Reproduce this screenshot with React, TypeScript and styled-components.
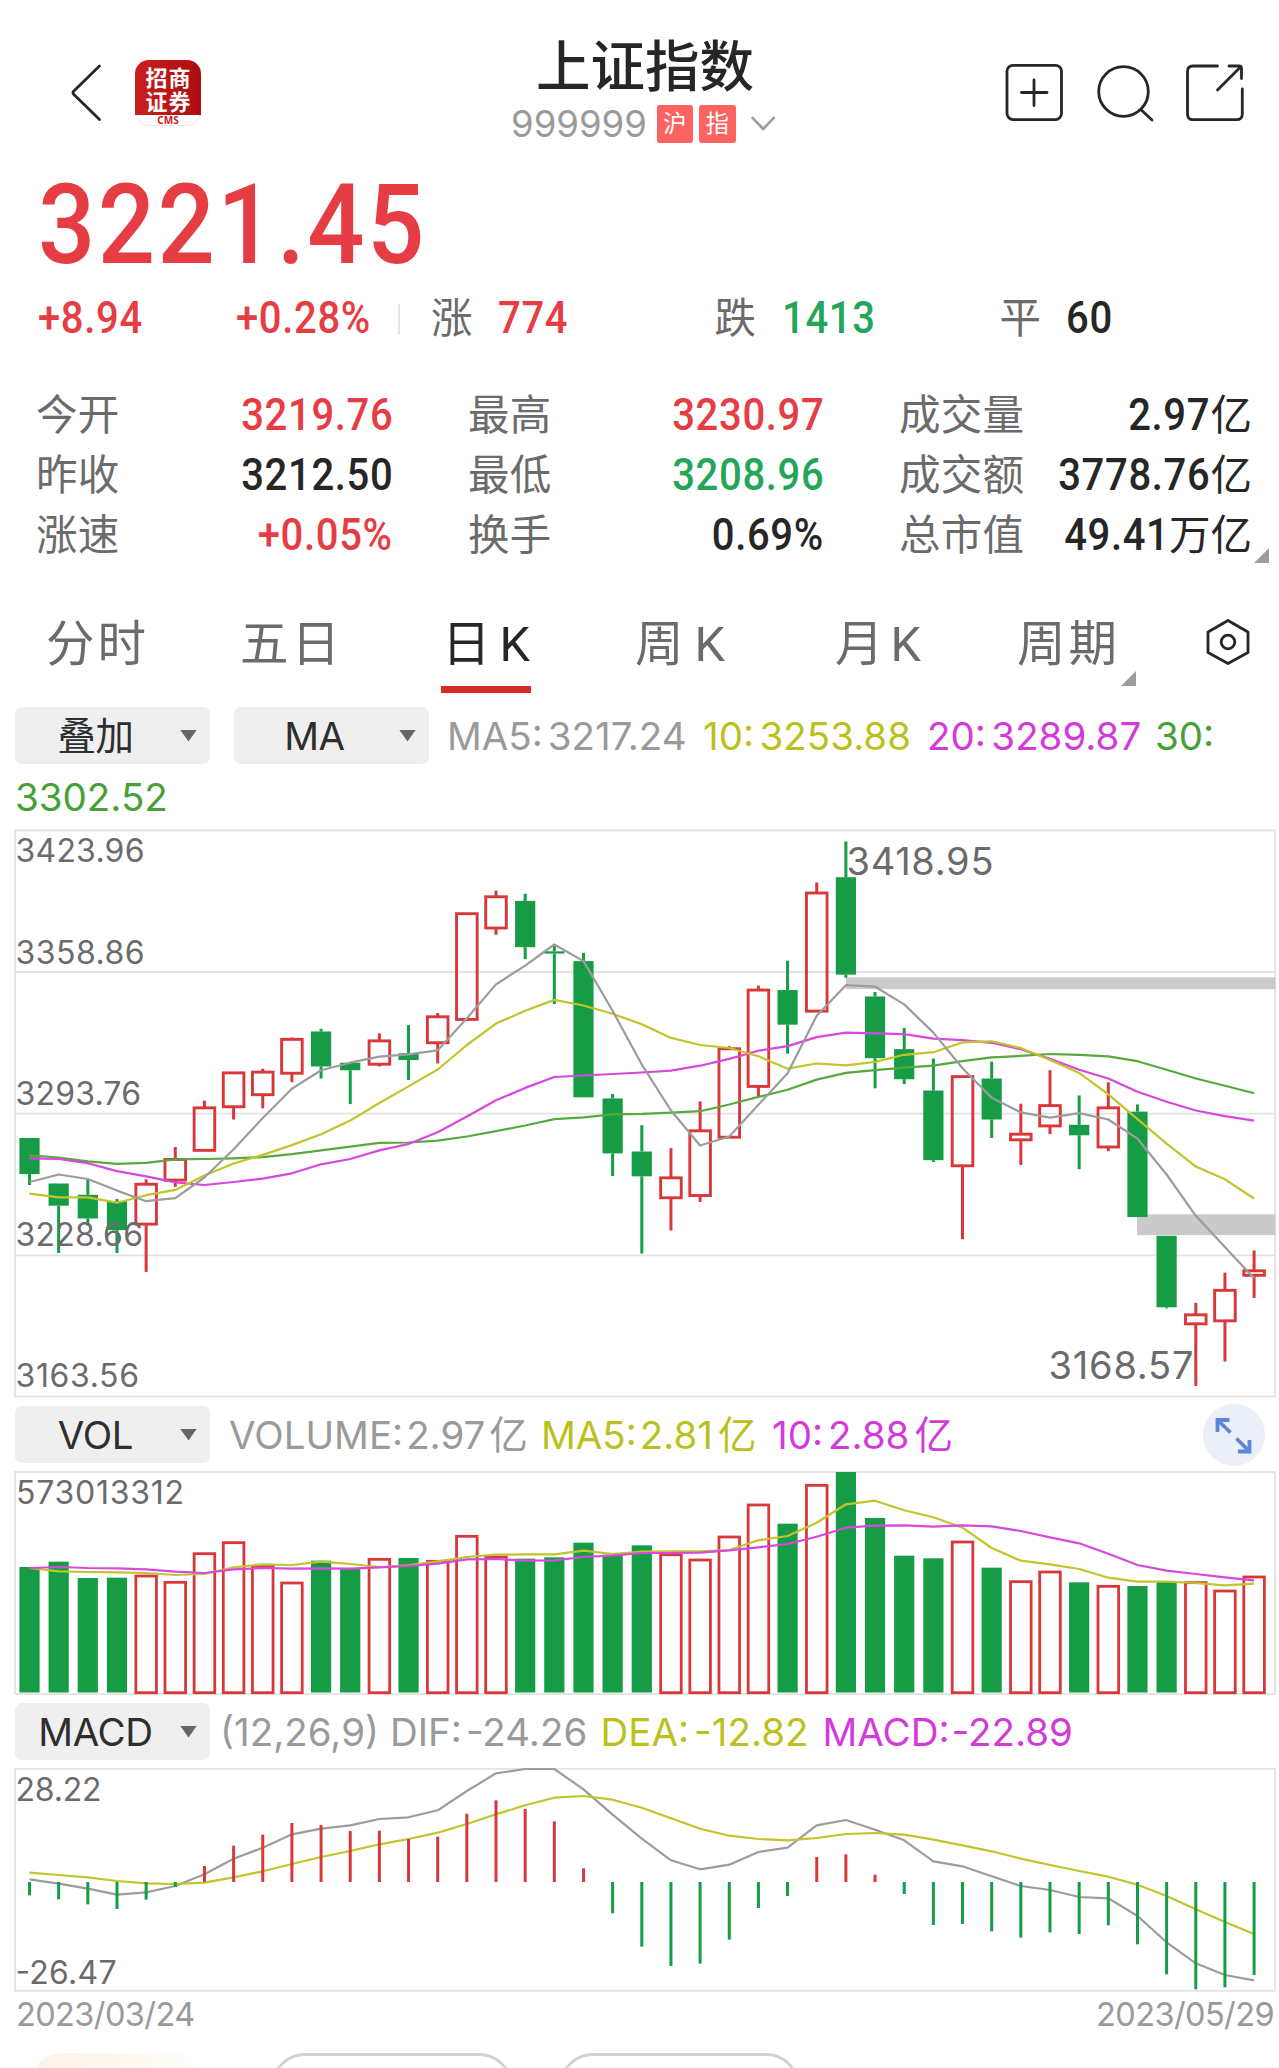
import React from "react";
import styled, { createGlobalStyle } from "styled-components";

const GlobalStyle = createGlobalStyle`
  body { margin: 0; background: #fff; overflow: hidden; }
  * { box-sizing: border-box; }
`;

const din = `Roboto, "Noto Sans CJK SC", sans-serif`;
const ui = `Inter, "Noto Sans CJK SC", sans-serif`;

const color = {
  ink: "#262626",
  label: "#6b6b6b",
  muted: "#9a9a9a",
  up: "#e53d43",
  down: "#23a65a",
  yellow: "#bcc01c",
  magenta: "#d23bd9",
  green: "#46a035",
  barUp: "#d8383a",
  barDown: "#159c45",
  frame: "#e3e3e3",
};

const Page = styled.main`
  width: 1279px;
  height: 2068px;
  overflow: hidden;
  display: flex;
  flex-direction: column;
  background: #fff;
  font-family: ${ui};
  color: ${color.ink};
  white-space: nowrap;
`;

/* ---------- header ---------- */

const Header = styled.header`
  height: 160px;
  flex: none;
  display: flex;
  align-items: flex-start;
`;

const HeaderLeft = styled.div`
  width: 511px;
  padding: 60px 0 0 70px;
  display: flex;
  gap: 32px;
`;

const Logo = styled.div`
  width: 66px;
  height: 66px;
  border-radius: 14px;
  border: 1px solid #f8e4e4;
  background: #fff;
  display: flex;
  flex-direction: column;
`;

const LogoMark = styled.div`
  height: 55px;
  flex: none;
  margin: -1px -1px 0;
  padding: 4px 0 0 1px;
  border-radius: 14px 14px 0 0;
  background: linear-gradient(90deg, #c8201f, #ad0d10);
  color: #fff;
  font: 700 22px/24px "Noto Sans CJK SC", sans-serif;
  letter-spacing: 1px;
  text-align: center;
`;

const LogoCaption = styled.div`
  color: #c21f21;
  font: 700 10px/10px "Noto Sans", sans-serif;
  text-align: center;
`;

const TitleBlock = styled.div`
  width: 268px;
  padding-top: 31px;
  display: flex;
  flex-direction: column;
`;

const Title = styled.h1`
  margin: 0;
  height: 73px;
  font: 500 54.5px/73px ${din};
  text-align: center;
`;

const CodeRow = styled.div`
  height: 40px;
  display: flex;
  align-items: center;
  gap: 6px;
`;

const Code = styled.span`
  width: 141.5px;
  color: ${color.muted};
  font-size: 36.5px;
  line-height: 40px;
`;

const Tag = styled.span`
  width: 37px;
  height: 38px;
  border-radius: 3px;
  background: #fc6361;
  color: #fff;
  font: 400 23.5px/39px ${din};
  text-align: center;
`;

const HeaderIcons = styled.div`
  margin-left: auto;
  padding: 62px 35px 0 0;
  display: flex;
  gap: 30px;
`;

/* ---------- quote ---------- */

const Price = styled.div`
  width: 460px;
  height: 125px;
  flex: none;
  margin-left: 38px;
  padding-top: 2px;
  color: ${color.up};
  font: 500 112px/125px ${din};
  letter-spacing: 2.7px;
  transform: scaleX(0.9);
  transform-origin: left center;
`;

const Breadth = styled.div`
  height: 65px;
  flex: none;
  padding: 3px 0 0 37.5px;
  display: grid;
  grid-template-columns: 198px 162.5px 33px 283.5px 285px auto;
  align-items: center;
`;

const Num = styled.span<{ $c?: string; $end?: boolean }>`
  display: inline-block;
  color: ${(p) => p.$c ?? color.ink};
  font: 500 43.5px/60px ${din};
  letter-spacing: 0.7px;
  transform: scaleX(0.92);
  transform-origin: ${(p) => (p.$end ? "right" : "left")} center;
`;

const Cjk = styled.span`
  font: 400 41.5px/60px ${din};
`;

const Divider = styled.i`
  width: 2px;
  height: 31px;
  background: #e4e4e4;
`;

const Pair = styled.div`
  display: flex;
`;

const Label = styled.span<{ $w?: number }>`
  width: ${(p) => (p.$w ? p.$w + "px" : "auto")};
  color: ${color.label};
  font: 400 41.5px/60px ${din};
  letter-spacing: 0.3px;
`;

const Stats = styled.section`
  position: relative;
  height: 246px;
  flex: none;
  padding: 36px 27px 0 36px;
  display: grid;
  grid-template-columns: 357px 356px 353px;
  grid-auto-rows: 60px;
  column-gap: 75px;
`;

const Stat = styled.div`
  display: flex;
  justify-content: space-between;
`;

const Corner = styled.i<{ $x: number; $y: number }>`
  position: absolute;
  left: ${(p) => p.$x}px;
  top: ${(p) => p.$y}px;
  width: 15px;
  height: 15px;
  background: #9b9d9f;
  clip-path: polygon(100% 0, 100% 100%, 0 100%);
`;

/* ---------- tabs ---------- */

const Tabs = styled.nav`
  height: 109px;
  flex: none;
  padding-left: 46px;
  display: grid;
  grid-template-columns: 194px 201px 194px 200px 182px 187px auto;
  align-items: start;
`;

const Tab = styled.div<{ $active?: boolean }>`
  position: relative;
  justify-self: start;
  width: ${(p) => (p.$active ? "90px" : "auto")};
  height: 97px;
  padding-left: ${(p) => (p.$active ? 1 : 0)}px;
  border-bottom: 7px solid ${(p) => (p.$active ? "#d92b2b" : "transparent")};
  color: ${(p) => (p.$active ? color.ink : color.label)};
  font: 400 48.5px/97px ${din};
  letter-spacing: 3px;
`;

const Unit = styled.span<{ $gap: number }>`
  margin-left: ${(p) => p.$gap}px;
`;

const SettingsSlot = styled.div`
  padding: 21px 0 0;
`;

/* ---------- indicator rows ---------- */

const IndicatorRow = styled.div<{ $h: number }>`
  height: ${(p) => p.$h}px;
  flex: none;
  padding-left: 15px;
  display: flex;
  flex-wrap: wrap;
  align-content: flex-start;
`;

const Slot = styled.div<{ $w?: number; $c?: string; $h?: number }>`
  width: ${(p) => (p.$w ? p.$w + "px" : "auto")};
  height: ${(p) => p.$h ?? 61}px;
  padding-top: 2px;
  display: flex;
  align-items: center;
  color: ${(p) => p.$c ?? color.ink};
  font-size: 38.5px;
  line-height: 57px;
`;

const Value = styled.span<{ $gap?: number }>`
  margin-left: ${(p) => p.$gap ?? 5.5}px;
`;

const Select = styled.button`
  width: 195px;
  height: 57px;
  margin-top: -2px;
  padding: 0 13px 0 0;
  border: 0;
  border-radius: 7px;
  background: #efefef;
  color: #2e2e2e;
  display: flex;
  align-items: center;
  font: 400 38.5px/57px ${ui};
  letter-spacing: -0.4px;
`;

const SelectText = styled.span`
  flex: 1;
  text-align: center;
  padding: 1px 4px 0 0;
`;

const Caret = styled.i`
  width: 17px;
  height: 12px;
  background: #666;
  clip-path: polygon(0 0, 100% 0, 50% 100%);
`;

const ChartSvg = styled.svg`
  display: block;
  flex: none;
  font-family: ${ui};
`;

const Dates = styled.div`
  height: 60px;
  flex: none;
  padding: 0 5px 0 16px;
  display: flex;
  justify-content: space-between;
  color: ${color.muted};
  font-size: 32.5px;
  line-height: 43px;
  letter-spacing: -0.6px;
`;

const Pills = styled.div`
  height: 15px;
  flex: none;
  padding-left: 29px;
  display: flex;
  overflow: hidden;
`;

const Pill = styled.div<{ $w: number; $gap: number; $warm?: boolean }>`
  width: ${(p) => p.$w}px;
  height: 68px;
  flex: none;
  margin-right: ${(p) => p.$gap}px;
  border-radius: 34px;
  border: ${(p) => (p.$warm ? "0" : "3px solid #d2d2d2")};
  background: ${(p) => (p.$warm ? "linear-gradient(90deg, #fdf3e6, #fffaf2 70%, #ffffff)" : "#fff")};
`;

/* ---------- chart data ---------- */

const cx = (i: number) => 29.5 + 29.157 * i;

type Candle = [0 | 1, number, number, number, number];
// [rising, high, body top, body bottom, low], in plot units below the upper edge
const candles: Candle[] = [
  [0, 845, 845, 941, 970], [0, 966, 966, 1025, 1151], [0, 955, 996, 1059, 1078], [0, 1007, 1013, 1090, 1151],
  [1, 955, 968, 1074, 1201], [1, 869, 902, 957, 975], [1, 746, 765, 878, 880], [1, 670, 672, 762, 796],
  [1, 661, 670, 730, 766], [1, 578, 583, 673, 697], [0, 555, 562, 655, 687], [0, 645, 645, 665, 755],
  [1, 567, 587, 649, 655], [0, 545, 620, 638, 691], [1, 513, 523, 592, 647], [1, 249, 249, 530, 530],
  [1, 188, 204, 287, 305], [0, 196, 215, 338, 370], [0, 331, 349, 355, 489], [0, 353, 375, 737, 737],
  [0, 728, 740, 886, 946], [0, 811, 881, 947, 1152], [1, 872, 951, 1004, 1091], [1, 748, 826, 998, 1015],
  [1, 601, 608, 843, 843], [1, 440, 452, 708, 735], [0, 374, 452, 544, 621], [1, 166, 194, 508, 508],
  [0, 57, 152, 411, 419], [0, 457, 469, 633, 713], [0, 553, 609, 689, 702], [0, 634, 719, 904, 909],
  [1, 682, 682, 919, 1114], [0, 642, 687, 796, 845], [1, 754, 835, 850, 917], [1, 665, 759, 813, 835],
  [0, 732, 810, 838, 928], [1, 697, 765, 869, 880], [0, 756, 775, 1055, 1055], [0, 1105, 1105, 1295, 1298],
  [1, 1283, 1315, 1339, 1504], [1, 1203, 1250, 1331, 1439], [1, 1144, 1198, 1210, 1270],
];

const priceMa5 = [962, 942, 954, 985, 1013, 1005, 950, 875, 792, 714, 665, 645, 629, 623, 612, 527, 437, 387, 331, 375, 507, 650, 772, 865, 841, 757, 673, 520, 439, 443, 490, 565, 660, 738, 777, 791, 779, 796, 847, 942, 1052, 1135, 1218];
const priceMa10 = [993, 1003, 1003, 1017, 997, 983, 945, 913, 890, 864, 835, 799, 752, 708, 663, 598, 541, 507, 478, 493, 515, 543, 579, 598, 606, 628, 661, 647, 652, 643, 624, 617, 591, 588, 606, 638, 672, 729, 795, 860, 921, 955, 1006];
const priceMa20 = [899, 901, 912, 933, 947, 963, 970, 962, 953, 939, 915, 901, 878, 861, 830, 788, 745, 712, 683, 679, 675, 671, 666, 653, 635, 613, 601, 577, 565, 567, 569, 581, 585, 592, 609, 635, 664, 687, 722, 749, 772, 787, 799];
const priceMa30 = [891, 897, 907, 914, 911, 902, 901, 899, 896, 888, 878, 868, 858, 857, 852, 841, 827, 812, 795, 790, 782, 781, 778, 774, 756, 736, 717, 690, 672, 665, 658, 653, 641, 631, 627, 622, 624, 628, 641, 664, 687, 706, 726];

const volumeTop = [516, 500, 549, 548, 543, 562, 476, 443, 514, 564, 497, 522, 493, 489, 499, 424, 486, 491, 487, 443, 479, 451, 479, 495, 426, 330, 386, 271, 231, 369, 482, 490, 441, 518, 560, 531, 562, 574, 573, 561, 563, 588, 546];
const volumeMa5 = [519, 529, 531, 532, 534, 540, 537, 517, 508, 510, 500, 507, 516, 511, 499, 486, 479, 478, 478, 467, 477, 470, 469, 469, 465, 436, 423, 383, 328, 317, 346, 367, 398, 459, 497, 508, 522, 548, 560, 560, 564, 571, 566];
const volumeMa10 = [519, 516, 519, 520, 523, 530, 534, 523, 519, 521, 520, 521, 517, 513, 506, 493, 492, 497, 496, 486, 482, 474, 474, 473, 466, 457, 447, 425, 398, 392, 391, 395, 391, 394, 408, 427, 445, 476, 510, 527, 537, 547, 556];

const macdEnd = [436, 448, 463, 477, 449, 411, 348, 287, 254, 219, 225, 243, 242, 267, 260, 191, 151, 177, 214, 355, 490, 590, 648, 641, 569, 474, 438, 321, 313, 374, 432, 525, 522, 544, 563, 547, 552, 526, 583, 673, 718, 712, 675];
const dif = [388, 401, 416, 434, 427, 408, 373, 326, 293, 253, 236, 226, 207, 202, 181, 123, 70, 57, 57, 118, 194, 266, 331, 358, 344, 306, 293, 226, 210, 239, 271, 334, 349, 379, 408, 420, 441, 445, 498, 577, 640, 675, 691];
const dea = [368, 375, 382, 393, 400, 402, 398, 382, 364, 342, 321, 303, 283, 267, 248, 222, 193, 166, 143, 138, 149, 173, 205, 236, 257, 267, 271, 264, 252, 249, 254, 269, 286, 304, 326, 345, 363, 380, 404, 438, 478, 516, 552];

const priceY = (v: number) => 820 + v / 2.6576;
const volY = (v: number) => 1395 + v / 3;
const macdY = (v: number) => 1750 + v / 3;

function Line({ data, y, stroke }: { data: number[]; y: (v: number) => number; stroke: string }) {
  const points = data.map((v, i) => `${cx(i).toFixed(1)},${y(v).toFixed(1)}`).join(" ");
  return <polyline points={points} fill="none" stroke={stroke} strokeWidth={2.2} strokeLinejoin="round" />;
}

function Mark({ x, y, w, size, children }: { x: number; y: number; w: number; size: number; children: string }) {
  return (
    <text x={x} y={y} fontSize={size} textLength={w} fill={color.label}>
      {children}
    </text>
  );
}

function PriceChart() {
  return (
    <ChartSvg width={1279} height={570} viewBox="0 828 1279 570">
      <rect x={15} y={830.5} width={1260} height={566} fill="none" stroke={color.frame} strokeWidth={1.8} />
      {[972, 1113.6, 1255.3].map((y) => (
        <line key={y} x1={15} x2={1275} y1={y} y2={y} stroke={color.frame} strokeWidth={1.8} />
      ))}
      <rect x={846} y={977.3} width={429.5} height={11.8} fill="#cacaca" />
      <rect x={1137} y={1214.3} width={138.5} height={20.8} fill="#cacaca" />
      {candles.map(([up, hi, top, bottom, lo], i) => {
        const x = cx(i);
        const c = up ? color.barUp : color.barDown;
        return (
          <g key={i} stroke={c} strokeWidth={3} fill={up ? "none" : c}>
            <line x1={x} x2={x} y1={priceY(hi)} y2={priceY(top)} />
            <line x1={x} x2={x} y1={priceY(bottom)} y2={priceY(lo)} />
            {up ? (
              <rect x={x - 10.3} y={priceY(top)} width={20.6} height={priceY(bottom) - priceY(top)} strokeWidth={2.9} />
            ) : (
              <rect x={x - 10.1} y={priceY(top)} width={20.2} height={priceY(bottom) - priceY(top)} stroke="none" />
            )}
          </g>
        );
      })}
      <Line data={priceMa30} y={priceY} stroke="#56a83f" />
      <Line data={priceMa20} y={priceY} stroke="#d847de" />
      <Line data={priceMa10} y={priceY} stroke="#c1c42a" />
      <Line data={priceMa5} y={priceY} stroke="#9c9c9c" />
      <Mark x={15.5} y={862} w={129} size={32}>3423.96</Mark>
      <Mark x={15.5} y={964.3} w={129} size={32}>3358.86</Mark>
      <Mark x={15.5} y={1105.2} w={125.5} size={32}>3293.76</Mark>
      <Mark x={15.5} y={1246.3} w={127.5} size={32}>3228.66</Mark>
      <Mark x={15.5} y={1387.3} w={123.5} size={32}>3163.56</Mark>
      <Mark x={846.5} y={875} w={147} size={38}>3418.95</Mark>
      <Mark x={1048.5} y={1379} w={145} size={38}>3168.57</Mark>
    </ChartSvg>
  );
}

function VolumeChart() {
  return (
    <ChartSvg width={1279} height={226} viewBox="0 1470 1279 226">
      <rect x={15} y={1472} width={1260} height={222} fill="none" stroke={color.frame} strokeWidth={1.8} />
      {volumeTop.map((v, i) => {
        const x = cx(i);
        const y = volY(v);
        return candles[i][0] ? (
          <rect key={i} x={x - 10.3} y={y} width={20.6} height={1692.7 - y} fill="none" stroke={color.barUp} strokeWidth={2.8} />
        ) : (
          <rect key={i} x={x - 10.1} y={y} width={20.2} height={1692.5 - y} fill={color.barDown} />
        );
      })}
      <Line data={volumeMa5} y={volY} stroke="#c1c42a" />
      <Line data={volumeMa10} y={volY} stroke="#d847de" />
      <Mark x={16} y={1503.8} w={168} size={32}>573013312</Mark>
    </ChartSvg>
  );
}

function MacdChart() {
  return (
    <ChartSvg width={1279} height={226} viewBox="0 1767 1279 226">
      <rect x={15} y={1768.8} width={1260} height={222} fill="none" stroke={color.frame} strokeWidth={1.8} />
      <Line data={dif} y={macdY} stroke="#9c9c9c" />
      <Line data={dea} y={macdY} stroke="#c1c42a" />
      {macdEnd.map((v, i) => (
        <line key={i} x1={cx(i)} x2={cx(i)} y1={1882} y2={macdY(v)} stroke={v < 396 ? color.barUp : color.barDown} strokeWidth={3} />
      ))}
      <Mark x={15.5} y={1801.3} w={86} size={32}>28.22</Mark>
      <Mark x={15.5} y={1984.3} w={101} size={32}>-26.47</Mark>
    </ChartSvg>
  );
}

/* ---------- icons ---------- */

const stroke = { fill: "none", stroke: color.ink, strokeWidth: 2.8, strokeLinecap: "round" as const, strokeLinejoin: "round" as const };

const BackIcon = () => (
  <svg width="33" height="66" viewBox="70 60 33 66"><path d="M99.5 66 L73.6 91.2 Q72.4 92.7 73.6 94.2 L99.5 119.5" {...stroke} /></svg>
);
const AddIcon = () => (
  <svg width="60" height="60" viewBox="1005 62 60 60">
    <rect x="1008" y="65.3" width="54.5" height="54.3" rx="6" {...stroke} />
    <path d="M1022.5 92.5H1048M1035 80V105.5" {...stroke} />
  </svg>
);
const SearchIcon = () => (
  <svg width="60" height="60" viewBox="1095 62 60 60">
    <circle cx="1124.5" cy="91.5" r="24.8" {...stroke} />
    <path d="M1141.8 109.5L1153 120" {...stroke} />
  </svg>
);
const ShareIcon = () => (
  <svg width="60" height="60" viewBox="1185 62 60 60">
    <path d="M1218.5 66H1194Q1188.5 66 1188.5 71.5V114Q1188.5 119.7 1194 119.7H1237.5Q1243.3 119.7 1243.3 114V89M1230 66H1240Q1242.5 66 1242.5 68.5V78.5M1241.5 67L1218.5 90" {...stroke} />
  </svg>
);
const HexIcon = () => (
  <svg width="48" height="50" viewBox="1205 617 48 50">
    <path d="M1229 620.5L1249 632V652.5L1229 663.5L1209 652.5V632Z" {...stroke} />
    <circle cx="1229" cy="642" r="6.8" {...stroke} />
  </svg>
);
const ExpandIcon = () => (
  <svg width="64" height="64" viewBox="1203 1403 64 64">
    <circle cx="1235" cy="1434.8" r="31" fill="#ebeffa" />
    <g fill="none" stroke="#5b88d6" strokeWidth="3.8">
      <path d="M1218.5 1432V1420H1230.5M1219 1420.5L1231.5 1432.5" />
      <path d="M1250.5 1440V1451.5H1239M1250 1451L1237.5 1438.5" />
    </g>
  </svg>
);

const ExpandSlot = styled.div`
  margin-left: auto;
  padding: 5px 13px 0 0;
`;

const stats: [string, string, string, string?][] = [
  ["今开", "3219.76", "", color.up],
  ["最高", "3230.97", "", color.up],
  ["成交量", "2.97", "亿"],
  ["昨收", "3212.50", ""],
  ["最低", "3208.96", "", color.down],
  ["成交额", "3778.76", "亿"],
  ["涨速", "+0.05%", "", color.up],
  ["换手", "0.69%", ""],
  ["总市值", "49.41", "万亿"],
];

function Dropdown({ text }: { text: string }) {
  return (
    <Select>
      <SelectText>{text}</SelectText>
      <Caret />
    </Select>
  );
}

export default function App() {
  return (
    <Page>
      <GlobalStyle />
      <Header>
        <HeaderLeft>
          <BackIcon />
          <Logo>
            <LogoMark>招商<br />证券</LogoMark>
            <LogoCaption>CMS</LogoCaption>
          </Logo>
        </HeaderLeft>
        <TitleBlock>
          <Title>上证指数</Title>
          <CodeRow>
            <Code>999999</Code>
            <Tag>沪</Tag>
            <Tag>指</Tag>
            <svg width="38" height="20" viewBox="0 0 38 20">
              <path d="M10 3L21.5 15L33 3" fill="none" stroke="#a0a0a0" strokeWidth="2.8" />
            </svg>
          </CodeRow>
        </TitleBlock>
        <HeaderIcons>
          <AddIcon />
          <SearchIcon />
          <ShareIcon />
        </HeaderIcons>
      </Header>

      <Price>3221.45</Price>
      <Breadth>
        <Num $c={color.up}>+8.94</Num>
        <Num $c={color.up}>+0.28%</Num>
        <Divider />
        <Pair><Label $w={67}>涨</Label><Num $c={color.up}>774</Num></Pair>
        <Pair><Label $w={67}>跌</Label><Num $c={color.down}>1413</Num></Pair>
        <Pair><Label $w={66}>平</Label><Num>60</Num></Pair>
      </Breadth>

      <Stats>
        {stats.map(([label, value, unit, c]) => (
          <Stat key={label}>
            <Label>{label}</Label>
            <span><Num $c={c} $end>{value}</Num>{unit && <Cjk>{unit}</Cjk>}</span>
          </Stat>
        ))}
        <Corner $x={1254} $y={198} />
      </Stats>

      <Tabs>
        <Tab>分时</Tab>
        <Tab>五日</Tab>
        <Tab $active>日<Unit $gap={6}>K</Unit></Tab>
        <Tab>周<Unit $gap={8}>K</Unit></Tab>
        <Tab>月<Unit $gap={4}>K</Unit></Tab>
        <Tab>周期<Corner $x={104} $y={75} /></Tab>
        <SettingsSlot><HexIcon /></SettingsSlot>
      </Tabs>

      <IndicatorRow $h={123}>
        <Slot $w={219}><Dropdown text="叠加" /></Slot>
        <Slot $w={213}><Dropdown text="MA" /></Slot>
        <Slot $w={256} $c={color.muted}>MA5:<Value $gap={5}>3217.24</Value></Slot>
        <Slot $w={224} $c={color.yellow}>10:<Value>3253.88</Value></Slot>
        <Slot $w={228} $c={color.magenta}>20:<Value>3289.87</Value></Slot>
        <Slot $c={color.green}>30:</Slot>
        <Slot $w={200} $c={color.green}>3302.52</Slot>
      </IndicatorRow>
      <PriceChart />

      <IndicatorRow $h={72}>
        <Slot $w={214} $h={73}><Dropdown text="VOL" /></Slot>
        <Slot $w={312} $h={73} $c={color.muted}>VOLUME:<Value $gap={3}>2.97<Unit $gap={4}>亿</Unit></Value></Slot>
        <Slot $w={231} $h={73} $c={color.yellow}>MA5:<Value $gap={3}>2.81<Unit $gap={5}>亿</Unit></Value></Slot>
        <Slot $h={73} $c={color.magenta}>10:<Value $gap={5}>2.88<Unit $gap={5}>亿</Unit></Value></Slot>
        <ExpandSlot><ExpandIcon /></ExpandSlot>
      </IndicatorRow>
      <VolumeChart />

      <IndicatorRow $h={71}>
        <Slot $w={205} $h={71}><Dropdown text="MACD" /></Slot>
        <Slot $w={170} $h={71} $c={color.muted}>(12,26,9)</Slot>
        <Slot $w={210.5} $h={71} $c={color.muted}>DIF:<Value $gap={4}>-24.26</Value></Slot>
        <Slot $w={222} $h={71} $c={color.yellow}>DEA:<Value $gap={5}>-12.82</Value></Slot>
        <Slot $h={71} $c={color.magenta}>MACD:<Value $gap={2}>-22.89</Value></Slot>
      </IndicatorRow>
      <MacdChart />

      <Dates>
        <span>2023/03/24</span>
        <span>2023/05/29</span>
      </Dates>
      <Pills>
        <Pill $w={179} $gap={63} $warm />
        <Pill $w={242} $gap={46} />
        <Pill $w={241} $gap={0} />
      </Pills>
    </Page>
  );
}
